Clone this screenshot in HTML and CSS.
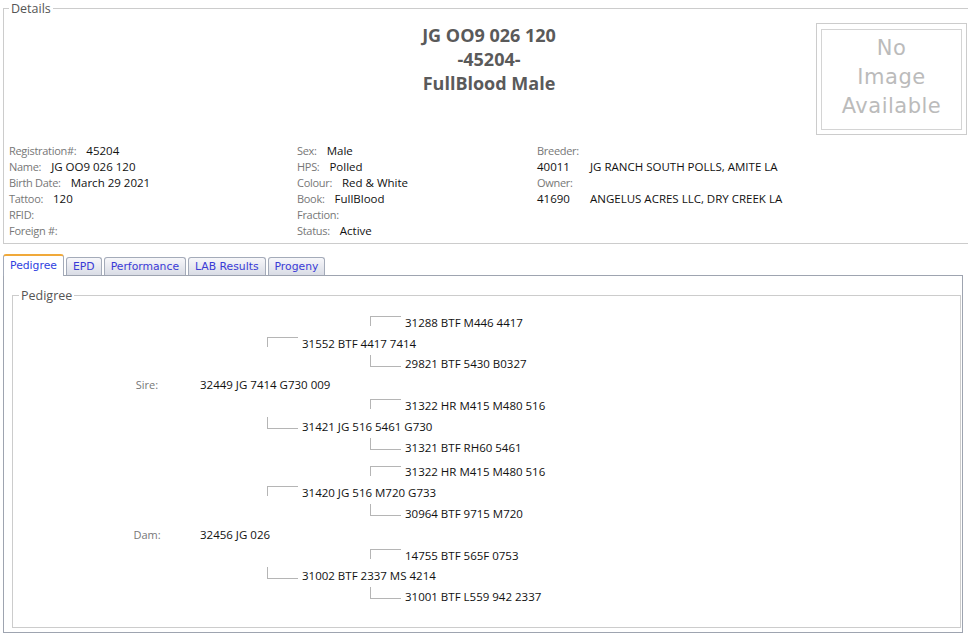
FILE: index.html
```html
<!DOCTYPE html>
<html lang="en">
<head>
  <meta charset="UTF-8" />
  <meta name="viewport" content="width=device-width, initial-scale=1.0" />
  <title>Animal Details - 45204</title>
  <link rel="stylesheet" href="styles.css">
</head>
<body>
  <!-- Animal summary -->
  <fieldset class="details">
    <legend>Details</legend>
    <div class="details-head">
      <div class="animal-title">JG OO9 026 120<br>-45204-<br>FullBlood Male</div>
      <div class="no-image">
        <div class="no-image-inner">No<br>Image<br>Available</div>
      </div>
    </div>
    <div class="details-grid">
      <div class="details-col">
        <div class="field"><span class="label">Registration#:</span><span class="value">45204</span></div>
        <div class="field"><span class="label">Name:</span><span class="value">JG OO9 026 120</span></div>
        <div class="field"><span class="label">Birth Date:</span><span class="value">March 29 2021</span></div>
        <div class="field"><span class="label">Tattoo:</span><span class="value">120</span></div>
        <div class="field"><span class="label">RFID:</span></div>
        <div class="field"><span class="label">Foreign #:</span></div>
      </div>
      <div class="details-col">
        <div class="field"><span class="label">Sex:</span><span class="value">Male</span></div>
        <div class="field"><span class="label">HPS:</span><span class="value">Polled</span></div>
        <div class="field"><span class="label">Colour:</span><span class="value">Red &amp; White</span></div>
        <div class="field"><span class="label">Book:</span><span class="value">FullBlood</span></div>
        <div class="field"><span class="label">Fraction:</span></div>
        <div class="field"><span class="label">Status:</span><span class="value">Active</span></div>
      </div>
      <div class="details-col">
        <div class="field"><span class="label">Breeder:</span></div>
        <div class="field"><span class="member-no">40011</span><span>JG RANCH SOUTH POLLS, AMITE LA</span></div>
        <div class="field"><span class="label">Owner:</span></div>
        <div class="field"><span class="member-no">41690</span><span>ANGELUS ACRES LLC, DRY CREEK LA</span></div>
      </div>
    </div>
  </fieldset>

  <!-- Tabs -->
  <div class="tabs">
    <ul class="tab-strip">
      <li class="tab active">Pedigree</li>
      <li class="tab">EPD</li>
      <li class="tab">Performance</li>
      <li class="tab">LAB Results</li>
      <li class="tab">Progeny</li>
    </ul>
    <div class="tab-panel">
      <fieldset class="pedigree">
        <legend>Pedigree</legend>
        <div class="tree">
          <div class="ped-block">
            <div class="ped-row gen3 up"><span class="link"></span>31288 BTF M446 4417</div>
            <div class="ped-row gen2 up"><span class="link"></span>31552 BTF 4417 7414</div>
            <div class="ped-row gen3 down"><span class="link"></span>29821 BTF 5430 B0327</div>
            <div class="ped-row gen1"><span class="ped-label">Sire:</span>32449 JG 7414 G730 009</div>
            <div class="ped-row gen3 up"><span class="link"></span>31322 HR M415 M480 516</div>
            <div class="ped-row gen2 down"><span class="link"></span>31421 JG 516 5461 G730</div>
            <div class="ped-row gen3 down"><span class="link"></span>31321 BTF RH60 5461</div>
          </div>
          <div class="ped-block">
            <div class="ped-row gen3 up"><span class="link"></span>31322 HR M415 M480 516</div>
            <div class="ped-row gen2 up"><span class="link"></span>31420 JG 516 M720 G733</div>
            <div class="ped-row gen3 down"><span class="link"></span>30964 BTF 9715 M720</div>
            <div class="ped-row gen1"><span class="ped-label">Dam:</span>32456 JG 026</div>
            <div class="ped-row gen3 up"><span class="link"></span>14755 BTF 565F 0753</div>
            <div class="ped-row gen2 down"><span class="link"></span>31002 BTF 2337 MS 4214</div>
            <div class="ped-row gen3 down"><span class="link"></span>31001 BTF L559 942 2337</div>
          </div>
        </div>
      </fieldset>
    </div>
  </div>
</body>
</html>
```

FILE: styles.css
```css
:root {
  --text: #111;
  --label: #777;
  --line: #ccc;
  --tree-line: #b5b5b5;
  --tab-border: #a4abb9;
  --tab-text: #3a3ad6;
  --tab-active: #f0a93a;
}

* {
  box-sizing: border-box;
}
body {
  margin: 0;
  padding: 0 5px 0 3px;
  font-family: "Open Sans", "Noto Sans", sans-serif;
  font-size: 11.5px;
  color: var(--text);
  background: #fff;
  overflow: hidden;
}

fieldset {
  margin: 0;
  min-width: 0;
  border: 1px solid var(--line);
}
legend {
  padding: 0 2px;
  font-size: 12.5px;
  line-height: 17px;
  color: #555;
}

/* Details box */
.details {
  margin-right: -12px;
  padding: 6px 5px 4px;
}
.details-head {
  display: grid;
  grid-template-columns: 1fr auto 1fr;
  margin-bottom: 8px;
}
.animal-title {
  grid-column: 2;
  font-size: 18px;
  font-weight: bold;
  line-height: 24px;
  color: #5a5a5a;
  text-align: center;
}
.no-image {
  grid-column: 3;
  justify-self: end;
  margin-right: 2px;
  padding: 5px 4px 4px;
  border: 1px solid #ccc;
}
.no-image-inner {
  width: 141px;
  height: 101px;
  padding-bottom: 4px;
  border: 1px solid #d4d4d4;
  display: flex;
  align-items: center;
  justify-content: center;
  text-align: center;
  font-family: "DejaVu Sans", sans-serif;
  font-size: 21px;
  line-height: 29px;
  letter-spacing: 0.5px;
  color: #bbb;
}

.details-grid {
  display: grid;
  grid-template-columns: 288px 240px 1fr;
  line-height: 16px;
}
.field {
  height: 16px;
  white-space: nowrap;
}
.label {
  margin-right: 10px;
  font-size: 11px;
  letter-spacing: -0.3px;
  color: var(--label);
}
.member-no {
  display: inline-block;
  width: 53px;
}

/* Tabs */
.tabs {
  margin-top: 11px;
}
.tab-strip {
  display: flex;
  align-items: flex-end;
  gap: 2px;
  height: 20px;
  margin: 0;
  padding: 0;
  list-style: none;
}
.tab {
  height: 18px;
  padding: 0 6px;
  border: 1px solid var(--tab-border);
  border-bottom: none;
  border-radius: 3px 3px 0 0;
  background: linear-gradient(#f7f7fa, #d9dce5);
  font-family: "DejaVu Sans", Verdana, sans-serif;
  font-size: 10.8px;
  line-height: 17px;
  color: var(--tab-text);
  cursor: pointer;
}
.tab.active {
  position: relative;
  z-index: 1;
  height: 22px;
  margin-bottom: -1px;
  border-top: 2px solid var(--tab-active);
  background: #fff;
  line-height: 19px;
  color: #2f3fe0;
}
.tab-panel {
  padding: 10.5px 1px 4px 8px;
  border: 1px solid #9ea4b0;
}

/* Pedigree tree */
.pedigree {
  padding: 8.5px 6px 20px;
}
.tree {
  display: flex;
  flex-direction: column;
  gap: 4px;
  padding-left: 88px;
}
.ped-row {
  display: flex;
  align-items: center;
  height: 20.8px;
  white-space: nowrap;
}
.gen2 { padding-left: 160px; }
.gen3 { padding-left: 263px; }
.ped-label {
  width: 80px;
  margin-right: 13px;
  font-size: 11px;
  color: var(--label);
  text-align: center;
}
.link {
  align-self: flex-start;
  width: 31px;
  margin-right: 4px;
  border-left: 1px solid var(--tree-line);
}
.up .link {
  height: 10px;
  margin-top: 4px;
  border-top: 1px solid var(--tree-line);
}
.down .link {
  height: 12px;
  margin-top: 1px;
  border-bottom: 1px solid var(--tree-line);
}
```
